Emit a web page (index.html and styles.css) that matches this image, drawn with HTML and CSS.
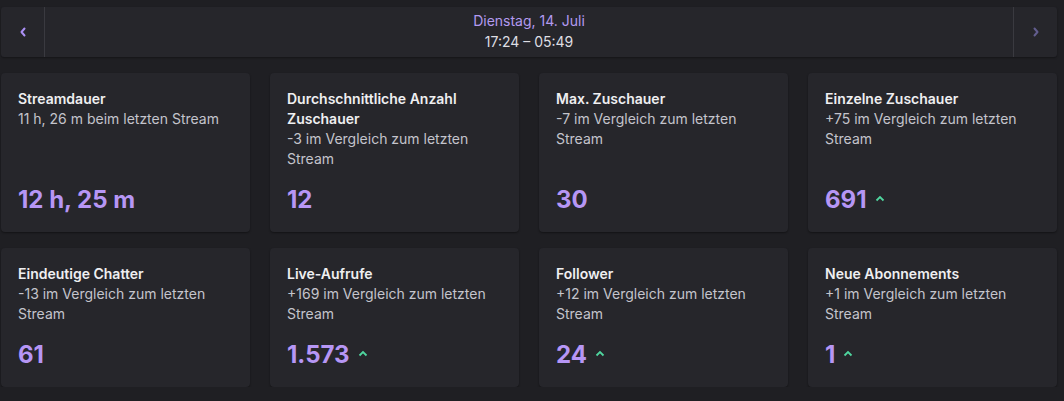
FILE: index.html
```html
<!DOCTYPE html>
<html lang="de">
<head>
  <meta charset="UTF-8" />
  <meta name="viewport" content="width=device-width, initial-scale=1.0"/>
  <title>Stream-Zusammenfassung</title>
  <link rel="stylesheet" href="styles.css">
</head>
<body>

  <div class="date-bar">
    <button class="nav-btn" type="button">
      <svg width="8" height="10" viewBox="0 0 8 10"><path d="M5.5 1.5 L2.5 5 L5.5 8.5" fill="none" stroke="#ab90f5" stroke-width="2" stroke-linecap="round" stroke-linejoin="round"/></svg>
    </button>
    <div class="date-info">
      <div class="date-day">Dienstag, 14. Juli</div>
      <div class="date-time">17:24 – 05:49</div>
    </div>
    <button class="nav-btn" type="button">
      <svg width="8" height="10" viewBox="0 0 8 10"><path d="M2.5 1.5 L5.5 5 L2.5 8.5" fill="none" stroke="#625d8e" stroke-width="2" stroke-linecap="round" stroke-linejoin="round"/></svg>
    </button>
  </div>

  <div class="stats-grid">
    <div class="stat-card">
      <div class="stat-title">Streamdauer</div>
      <div class="stat-sub">11 h, 26 m beim letzten Stream</div>
      <div class="stat-value">12 h, 25 m</div>
    </div>
    <div class="stat-card">
      <div class="stat-title">Durchschnittliche Anzahl Zuschauer</div>
      <div class="stat-sub">-3 im Vergleich zum letzten Stream</div>
      <div class="stat-value">12</div>
    </div>
    <div class="stat-card">
      <div class="stat-title">Max. Zuschauer</div>
      <div class="stat-sub">-7 im Vergleich zum letzten Stream</div>
      <div class="stat-value">30</div>
    </div>
    <div class="stat-card">
      <div class="stat-title">Einzelne Zuschauer</div>
      <div class="stat-sub">+75 im Vergleich zum letzten Stream</div>
      <div class="stat-value">691 <span class="up"><svg width="10" height="7" viewBox="0 0 10 7"><path d="M1.5 5.5 L5 2 L8.5 5.5" fill="none" stroke="currentColor" stroke-width="1.8"/></svg></span></div>
    </div>

    <div class="stat-card">
      <div class="stat-title">Eindeutige Chatter</div>
      <div class="stat-sub">-13 im Vergleich zum letzten Stream</div>
      <div class="stat-value">61</div>
    </div>
    <div class="stat-card">
      <div class="stat-title">Live-Aufrufe</div>
      <div class="stat-sub">+169 im Vergleich zum letzten Stream</div>
      <div class="stat-value">1.573 <span class="up"><svg width="10" height="7" viewBox="0 0 10 7"><path d="M1.5 5.5 L5 2 L8.5 5.5" fill="none" stroke="currentColor" stroke-width="1.8"/></svg></span></div>
    </div>
    <div class="stat-card">
      <div class="stat-title">Follower</div>
      <div class="stat-sub">+12 im Vergleich zum letzten Stream</div>
      <div class="stat-value">24 <span class="up"><svg width="10" height="7" viewBox="0 0 10 7"><path d="M1.5 5.5 L5 2 L8.5 5.5" fill="none" stroke="currentColor" stroke-width="1.8"/></svg></span></div>
    </div>
    <div class="stat-card">
      <div class="stat-title">Neue Abonnements</div>
      <div class="stat-sub">+1 im Vergleich zum letzten Stream</div>
      <div class="stat-value">1 <span class="up"><svg width="10" height="7" viewBox="0 0 10 7"><path d="M1.5 5.5 L5 2 L8.5 5.5" fill="none" stroke="currentColor" stroke-width="1.8"/></svg></span></div>
    </div>
  </div>

</body>
</html>
```

FILE: styles.css
```css
body {
  margin: 0;
  padding: 7px 7px 0 1px;
  background: #1f1f23;
  font-family: Inter, "Noto Sans", sans-serif;
  font-size: 14px;
  color: #efeff1;
  width: 1056px;
}

.date-bar {
  display: flex;
  height: 50px;
  background: #26262b;
  border-radius: 3px;
  box-shadow: 0 1px 2px rgba(0,0,0,0.35);
}

.nav-btn {
  width: 44px;
  background: transparent;
  border: none;
  padding: 0;
  display: flex;
  align-items: center;
  justify-content: center;
  cursor: pointer;
}

.nav-btn:first-child {
  border-right: 1px solid #3a3a40;
}

.nav-btn:last-child {
  border-left: 1px solid #3a3a40;
}

.date-info {
  flex: 1;
  display: flex;
  flex-direction: column;
  align-items: center;
  justify-content: center;
  line-height: 21px;
  padding-bottom: 3px;
}

.date-day {
  color: #b39af0;
}

.date-time {
  color: #dedee3;
}

.stats-grid {
  display: grid;
  grid-template-columns: repeat(4, 249px);
  column-gap: 20px;
  row-gap: 16px;
  margin-top: 16px;
}

.stat-card {
  background: #26262b;
  border-radius: 4px;
  box-shadow: 0 1px 2px rgba(0,0,0,0.4);
  padding: 16px 17px 17px;
  display: flex;
  flex-direction: column;
  line-height: 20px;
}

.stat-title {
  font-weight: 600;
  color: #efeff1;
}

.stat-sub {
  color: #c4c4cc;
}

.stat-value {
  margin-top: auto;
  padding-top: 16px;
  font-size: 24px;
  font-weight: 700;
  line-height: 30px;
  color: #b696f5;
  display: flex;
  align-items: center;
  gap: 8px;
}

.up {
  color: #4fd69f;
  display: flex;
  align-items: center;
  margin-top: -4px;
}
```
